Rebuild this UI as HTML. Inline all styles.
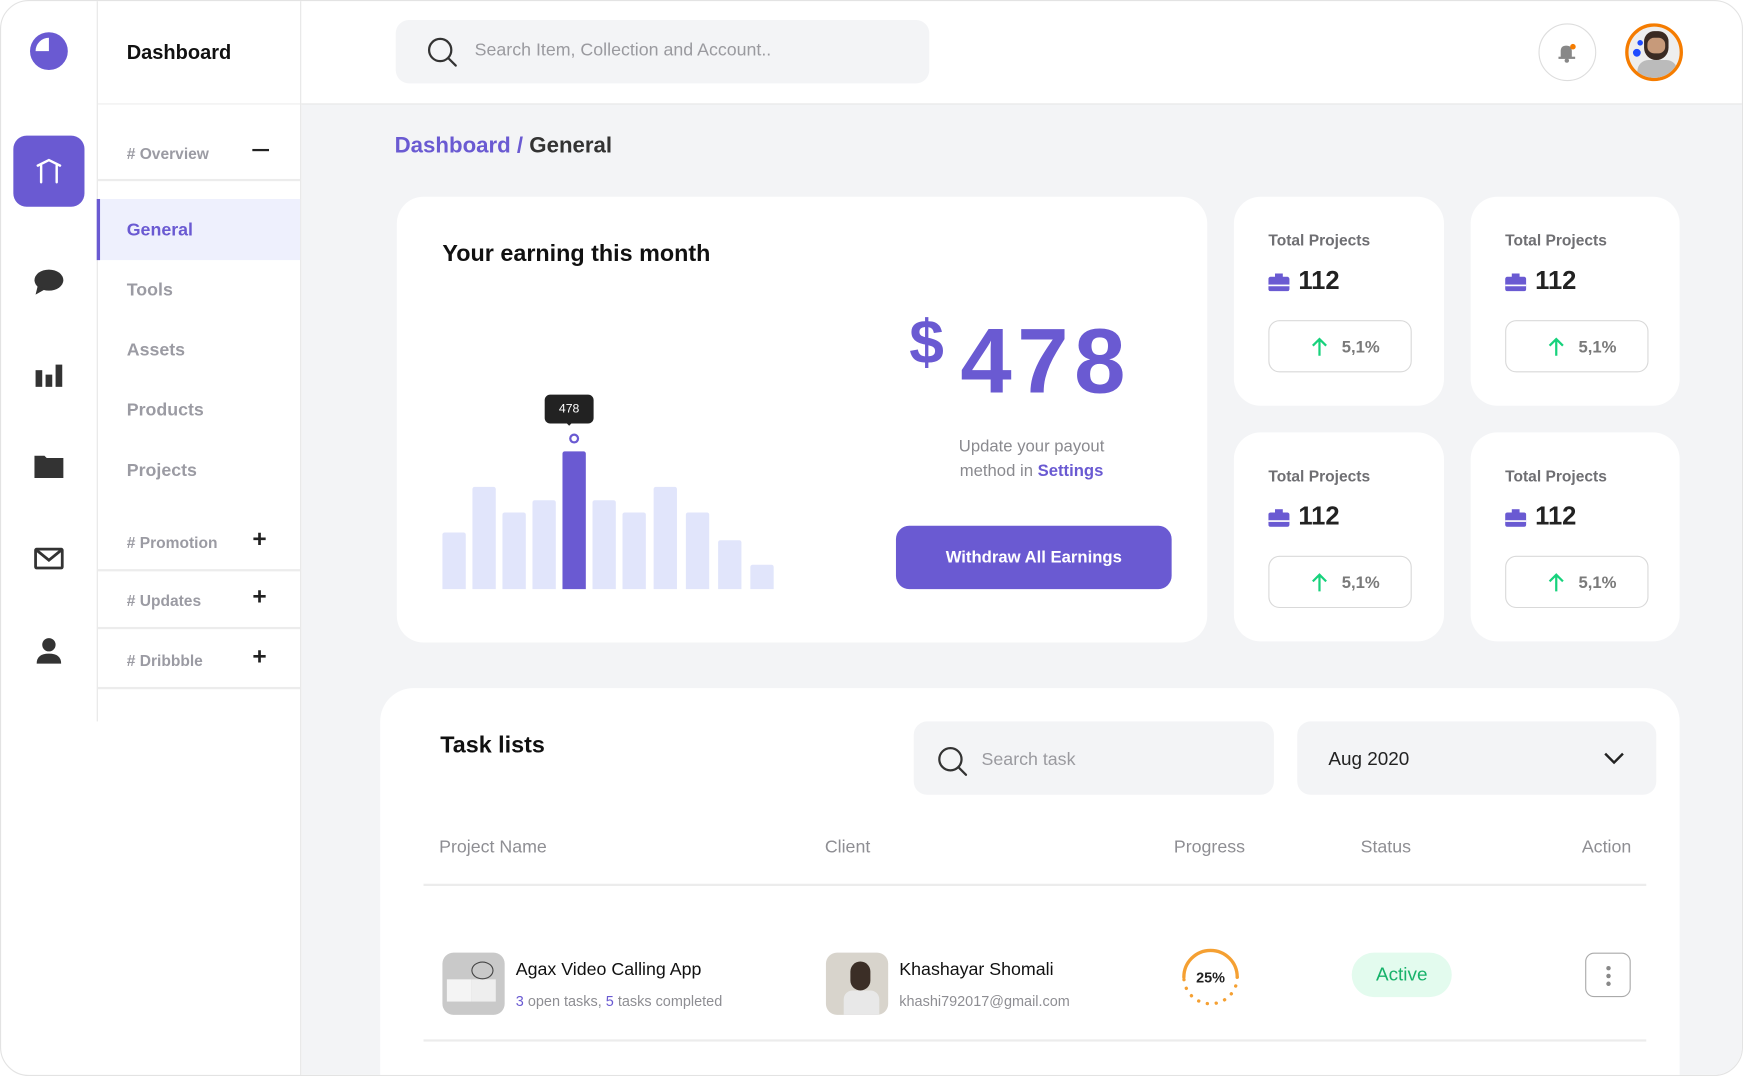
<!DOCTYPE html>
<html><head><meta charset="utf-8">
<style>
*{margin:0;padding:0;box-sizing:border-box}
html,body{width:1743px;height:1076px;overflow:hidden;background:#fff;font-family:"Liberation Sans",sans-serif}
#w{position:absolute;left:0;top:0;width:1568px;height:968px;transform:scale(1.11161);transform-origin:0 0;background:#fff;border:1px solid #e3e3e3;border-radius:26px;overflow:hidden}
.a{position:absolute}
.t{position:absolute;white-space:nowrap;line-height:1}
.main{left:270px;top:93px;right:0;bottom:0;background:#f3f4f6}
.side{color:#9b9ba3;font-size:16px;font-weight:bold}
.sec{color:#9b9ba3;font-size:14px;font-weight:bold}
.hl{height:2px;background:#ececec;left:87px;width:182px}
.card{background:#fff;border-radius:24px}
.stat .lbl{left:31px;top:32px;font-size:14px;font-weight:bold;color:#6f6f73}
.stat .num{left:58px;top:64px;font-size:23px;font-weight:bold;color:#222}
.stat .pill{left:31px;top:111px;width:129px;height:47px;border:1px solid #d9d9d9;border-radius:10px}
.stat .pct{left:65px;top:16px;font-size:15px;font-weight:bold;color:#7a7a7a}
.bar{position:absolute;width:21px;background:#e1e5fb;bottom:0;border-radius:2px 2px 0 0}
.th{top:754px;font-size:16px;color:#8e8e93}
</style></head><body>
<div id="w">
<div class="a main"></div>
<div class="a" style="left:86px;top:0;width:1px;height:648px;background:#e6e6e6"></div>
<div class="a" style="left:269px;top:0;width:1px;height:968px;background:#e6e6e6"></div>
<div class="a" style="left:270px;top:92px;width:1298px;height:1px;background:#e6e6e6"></div>
<svg class="a" style="left:25px;top:27px" width="36" height="36" viewBox="0 0 36 36"><circle cx="18" cy="18" r="17" fill="#6a5ad2"/><path d="M18 18V6A12 12 0 0 0 6 18Z" fill="#fff"/></svg>
<div class="a" style="left:11px;top:121px;width:64px;height:64px;background:#6a5ad2;border-radius:12px"></div>
<svg class="a" style="left:29px;top:139px" width="28" height="28" viewBox="0 0 28 28"><path d="M4 9L14 4L24 9M7 9V24M21 9V24" stroke="#fff" stroke-width="2.2" fill="none" stroke-linecap="round"/></svg>
<svg class="a" style="left:29px;top:240px" width="28" height="26" viewBox="0 0 28 26"><ellipse cx="14" cy="11" rx="13" ry="9.5" fill="#333"/><path d="M4 16L2 24L11 19Z" fill="#333"/></svg>
<svg class="a" style="left:30px;top:324px" width="26" height="24" viewBox="0 0 26 24"><rect x="1" y="8" width="6" height="15" fill="#333"/><rect x="10" y="12" width="6" height="11" fill="#333"/><rect x="19" y="3" width="6" height="20" fill="#333"/></svg>
<svg class="a" style="left:29px;top:406px" width="28" height="24" viewBox="0 0 28 24"><path d="M1 3H10L12 5H27V23H1Z" fill="#333"/></svg>
<svg class="a" style="left:29px;top:490px" width="28" height="24" viewBox="0 0 28 24"><rect x="2" y="3" width="24" height="17" rx="1" fill="none" stroke="#333" stroke-width="2.5"/><path d="M3 4L14 13L25 4" stroke="#333" stroke-width="2.5" fill="none"/></svg>
<svg class="a" style="left:29px;top:570px" width="28" height="28" viewBox="0 0 28 28"><circle cx="14" cy="9" r="6" fill="#333"/><path d="M3 26Q3 17 14 17Q25 17 25 26Z" fill="#333"/></svg>
<div class="t" style="left:113px;top:37px;font-size:18px;font-weight:bold;color:#111">Dashboard</div>
<div class="a hl" style="top:92px;height:1px"></div>
<div class="t sec" style="left:113px;top:130px">#&nbsp;Overview</div>
<div class="a" style="left:226px;top:133px;width:15px;height:2px;background:#222"></div>
<div class="a hl" style="top:160px"></div>
<div class="a" style="left:87px;top:178px;width:182px;height:55px;background:#eef0fd"></div>
<div class="a" style="left:86px;top:178px;width:3px;height:55px;background:#6a5ad2"></div>
<div class="t side" style="left:113px;top:199px;color:#6a5ad2">General</div>
<div class="t side" style="left:113px;top:253px">Tools</div>
<div class="t side" style="left:113px;top:307px">Assets</div>
<div class="t side" style="left:113px;top:361px">Products</div>
<div class="t side" style="left:113px;top:415px">Projects</div>
<div class="t sec" style="left:113px;top:480px">#&nbsp;Promotion</div>
<div class="t" style="left:226px;top:473px;font-size:22px;font-weight:bold;color:#222">+</div>
<div class="a hl" style="top:511px"></div>
<div class="t sec" style="left:113px;top:532px">#&nbsp;Updates</div>
<div class="t" style="left:226px;top:525px;font-size:22px;font-weight:bold;color:#222">+</div>
<div class="a hl" style="top:563px"></div>
<div class="t sec" style="left:113px;top:586px">#&nbsp;Dribbble</div>
<div class="t" style="left:226px;top:579px;font-size:22px;font-weight:bold;color:#222">+</div>
<div class="a hl" style="top:617px"></div>
<div class="a" style="left:355px;top:17px;width:480px;height:57px;background:#f3f4f6;border-radius:12px"></div>
<svg class="a" style="left:382px;top:31px" width="30" height="30" viewBox="0 0 30 30"><circle cx="13" cy="13" r="10" fill="none" stroke="#333" stroke-width="2"/><path d="M20.5 20.5L27 27" stroke="#333" stroke-width="2" stroke-linecap="round"/></svg>
<div class="t" style="left:426px;top:37px;font-size:16px;color:#9a9a9f">Search Item, Collection and Account..</div>
<div class="a" style="left:1383px;top:20px;width:52px;height:52px;border:1px solid #ddd;border-radius:50%"></div>
<svg class="a" style="left:1398px;top:35px" width="22" height="22" viewBox="0 0 22 22"><path d="M5 16V10Q5 5 10 5Q15 5 15 10V16Z" fill="#888"/><rect x="3" y="15" width="15" height="2" fill="#888"/><circle cx="10.5" cy="18.5" r="2" fill="#888"/><circle cx="16" cy="6" r="2.5" fill="#f57c00"/></svg>
<div class="a" style="left:1461px;top:20px;width:52px;height:52px;border:3px solid #f57c00;border-radius:50%;overflow:hidden;background:#eee">
<div class="a" style="left:14px;top:4px;width:22px;height:26px;background:#3a2a22;border-radius:10px 10px 12px 12px"></div>
<div class="a" style="left:17px;top:10px;width:16px;height:14px;background:#c79a7a;border-radius:6px"></div>
<div class="a" style="left:8px;top:30px;width:36px;height:20px;background:#bbb;border-radius:10px 10px 0 0"></div>
<div class="a" style="left:8px;top:12px;width:5px;height:5px;background:#1f4bff;border-radius:50%"></div>
<div class="a" style="left:4px;top:20px;width:7px;height:7px;background:#1f4bff;border-radius:50%"></div>
</div>
<div class="t" style="left:354px;top:120px;font-size:20px;font-weight:bold;color:#6a5ad2">Dashboard / <span style="color:#333">General</span></div>
<div class="a card" style="left:356px;top:176px;width:729px;height:401px">
<div class="t" style="left:41px;top:41px;font-size:21px;font-weight:bold;color:#111">Your earning this month</div>
<div class="a" style="left:41px;top:200px;width:300px;height:153px">
<div class="bar" style="left:0;height:51px"></div>
<div class="bar" style="left:27px;height:92px"></div>
<div class="bar" style="left:54px;height:69px"></div>
<div class="bar" style="left:81px;height:80px"></div>
<div class="bar" style="left:108px;height:124px;background:#6a5ad2"></div>
<div class="bar" style="left:135px;height:80px"></div>
<div class="bar" style="left:162px;height:69px"></div>
<div class="bar" style="left:190px;height:92px"></div>
<div class="bar" style="left:219px;height:69px"></div>
<div class="bar" style="left:248px;height:44px"></div>
<div class="bar" style="left:277px;height:22px"></div>
</div>
<div class="a" style="left:133px;top:178px;width:44px;height:26px;background:#222;border-radius:5px;color:#fff;font-size:11px;text-align:center;line-height:26px">478</div>
<div class="a" style="left:155px;top:202px;width:0;height:0;border:4px solid transparent;border-top-color:#222;margin-left:-4px"></div>
<div class="a" style="left:155px;top:213px;width:9px;height:9px;border:2px solid #6a5ad2;border-radius:50%;background:#fff"></div>
<div class="t" style="left:461px;top:103px;font-size:56px;font-weight:bold;color:#6a5ad2">$</div>
<div class="t" style="left:507px;top:106px;font-size:83px;font-weight:bold;color:#6a5ad2;letter-spacing:5px">478</div>
<div class="t" style="left:571px;top:214px;width:0;font-size:15px;color:#8a8a8f;line-height:22px;text-align:center"><div style="position:absolute;left:-150px;width:300px">Update your payout<br>method in <b style="color:#6a5ad2">Settings</b></div></div>
<div class="a" style="left:449px;top:296px;width:248px;height:57px;background:#6a5ad2;border-radius:12px;color:#fff;font-size:15px;font-weight:bold;text-align:center;line-height:57px">Withdraw All Earnings</div>
</div>
<div class="a card stat" style="left:1109px;top:176px;width:189px;height:188px"><div class="t lbl">Total Projects</div><svg class="a" style="left:31px;top:69px" width="19" height="16" viewBox="0 0 19 16"><rect x="0" y="3" width="19" height="13" rx="2" fill="#6a5ad2"/><rect x="6" y="0" width="7" height="4" fill="#6a5ad2"/><rect x="0" y="10" width="19" height="1.5" fill="#fff"/></svg><div class="t num">112</div><div class="a pill"><svg class="a" style="left:38px;top:14px" width="14" height="18" viewBox="0 0 14 18"><path d="M7 17V2M1 8L7 2L13 8" stroke="#17d27c" stroke-width="2" fill="none"/></svg><div class="t pct">5,1%</div></div></div>
<div class="a card stat" style="left:1322px;top:176px;width:188px;height:188px"><div class="t lbl">Total Projects</div><svg class="a" style="left:31px;top:69px" width="19" height="16" viewBox="0 0 19 16"><rect x="0" y="3" width="19" height="13" rx="2" fill="#6a5ad2"/><rect x="6" y="0" width="7" height="4" fill="#6a5ad2"/><rect x="0" y="10" width="19" height="1.5" fill="#fff"/></svg><div class="t num">112</div><div class="a pill"><svg class="a" style="left:38px;top:14px" width="14" height="18" viewBox="0 0 14 18"><path d="M7 17V2M1 8L7 2L13 8" stroke="#17d27c" stroke-width="2" fill="none"/></svg><div class="t pct">5,1%</div></div></div>
<div class="a card stat" style="left:1109px;top:388px;width:189px;height:188px"><div class="t lbl">Total Projects</div><svg class="a" style="left:31px;top:69px" width="19" height="16" viewBox="0 0 19 16"><rect x="0" y="3" width="19" height="13" rx="2" fill="#6a5ad2"/><rect x="6" y="0" width="7" height="4" fill="#6a5ad2"/><rect x="0" y="10" width="19" height="1.5" fill="#fff"/></svg><div class="t num">112</div><div class="a pill"><svg class="a" style="left:38px;top:14px" width="14" height="18" viewBox="0 0 14 18"><path d="M7 17V2M1 8L7 2L13 8" stroke="#17d27c" stroke-width="2" fill="none"/></svg><div class="t pct">5,1%</div></div></div>
<div class="a card stat" style="left:1322px;top:388px;width:188px;height:188px"><div class="t lbl">Total Projects</div><svg class="a" style="left:31px;top:69px" width="19" height="16" viewBox="0 0 19 16"><rect x="0" y="3" width="19" height="13" rx="2" fill="#6a5ad2"/><rect x="6" y="0" width="7" height="4" fill="#6a5ad2"/><rect x="0" y="10" width="19" height="1.5" fill="#fff"/></svg><div class="t num">112</div><div class="a pill"><svg class="a" style="left:38px;top:14px" width="14" height="18" viewBox="0 0 14 18"><path d="M7 17V2M1 8L7 2L13 8" stroke="#17d27c" stroke-width="2" fill="none"/></svg><div class="t pct">5,1%</div></div></div>
<div class="a" style="left:341px;top:618px;width:1169px;height:349px;background:#fff;border-radius:30px 30px 0 0"></div>
<div class="t" style="left:395px;top:659px;font-size:21px;font-weight:bold;color:#111">Task lists</div>
<div class="a" style="left:821px;top:648px;width:324px;height:66px;background:#f3f4f6;border-radius:12px"></div>
<svg class="a" style="left:841px;top:669px" width="30" height="30" viewBox="0 0 30 30"><circle cx="13" cy="13" r="10" fill="none" stroke="#333" stroke-width="2"/><path d="M20.5 20.5L27 27" stroke="#333" stroke-width="2" stroke-linecap="round"/></svg>
<div class="t" style="left:882px;top:675px;font-size:16px;color:#9a9a9f">Search task</div>
<div class="a" style="left:1166px;top:648px;width:323px;height:66px;background:#f3f4f6;border-radius:12px"></div>
<div class="t" style="left:1194px;top:673px;font-size:17px;color:#222">Aug 2020</div>
<svg class="a" style="left:1441px;top:674px" width="20" height="14" viewBox="0 0 20 14"><path d="M2 3L10 11L18 3" stroke="#222" stroke-width="2.2" fill="none"/></svg>
<div class="t th" style="left:394px">Project Name</div>
<div class="t th" style="left:741px">Client</div>
<div class="t th" style="left:1055px">Progress</div>
<div class="t th" style="left:1223px">Status</div>
<div class="t th" style="left:1422px">Action</div>
<div class="a" style="left:380px;top:794px;width:1100px;height:2px;background:#ececec"></div>
<div class="a" style="left:397px;top:856px;width:56px;height:56px;border-radius:10px;background:#c9c9c9;overflow:hidden"><div class="a" style="left:4px;top:24px;width:22px;height:20px;background:#f4f4f4"></div><div class="a" style="left:26px;top:24px;width:22px;height:20px;background:#eee"></div><div class="a" style="left:26px;top:8px;width:20px;height:16px;border:1px solid #444;border-radius:50%"></div></div>
<div class="t" style="left:463px;top:864px;font-size:16px;color:#111">Agax Video Calling App</div>
<div class="t" style="left:463px;top:893px;font-size:13px;color:#8e8e93"><b style="color:#6a5ad2;font-weight:normal">3</b> open tasks, <b style="color:#6a5ad2;font-weight:normal">5</b> tasks completed</div>
<div class="a" style="left:742px;top:856px;width:56px;height:56px;border-radius:10px;background:#d8d4cc;overflow:hidden"><div class="a" style="left:22px;top:8px;width:18px;height:26px;background:#3b2e26;border-radius:9px"></div><div class="a" style="left:16px;top:34px;width:32px;height:24px;background:#e8e8e8;border-radius:8px 8px 0 0"></div></div>
<div class="t" style="left:808px;top:864px;font-size:16px;color:#111">Khashayar Shomali</div>
<div class="t" style="left:808px;top:893px;font-size:13px;color:#8e8e93">khashi792017@gmail.com</div>
<svg class="a" style="left:1060px;top:850px" width="56" height="56" viewBox="0 0 56 56"><path d="M4 28A24 24 0 0 1 52 28" stroke="#f5a032" stroke-width="3" fill="none" stroke-linecap="round"/><path d="M52 28A24 24 0 0 1 4 28" stroke="#f5a032" stroke-width="3" fill="none" stroke-linecap="round" stroke-dasharray="0.1 8"/><text x="28" y="33" text-anchor="middle" font-size="13" font-weight="bold" fill="#222" font-family="Liberation Sans">25%</text></svg>
<div class="a" style="left:1215px;top:856px;width:90px;height:40px;background:#e3fbee;border-radius:20px;color:#17b26a;font-size:17px;text-align:center;line-height:40px">Active</div>
<div class="a" style="left:1425px;top:856px;width:41px;height:40px;border:1px solid #aaa;border-radius:8px"><div class="a" style="left:18px;top:11px;width:4px;height:4px;border-radius:50%;background:#888;box-shadow:0 7px 0 #888,0 14px 0 #888"></div></div>
<div class="a" style="left:380px;top:934px;width:1100px;height:2px;background:#ececec"></div>
</div>
</body></html>
